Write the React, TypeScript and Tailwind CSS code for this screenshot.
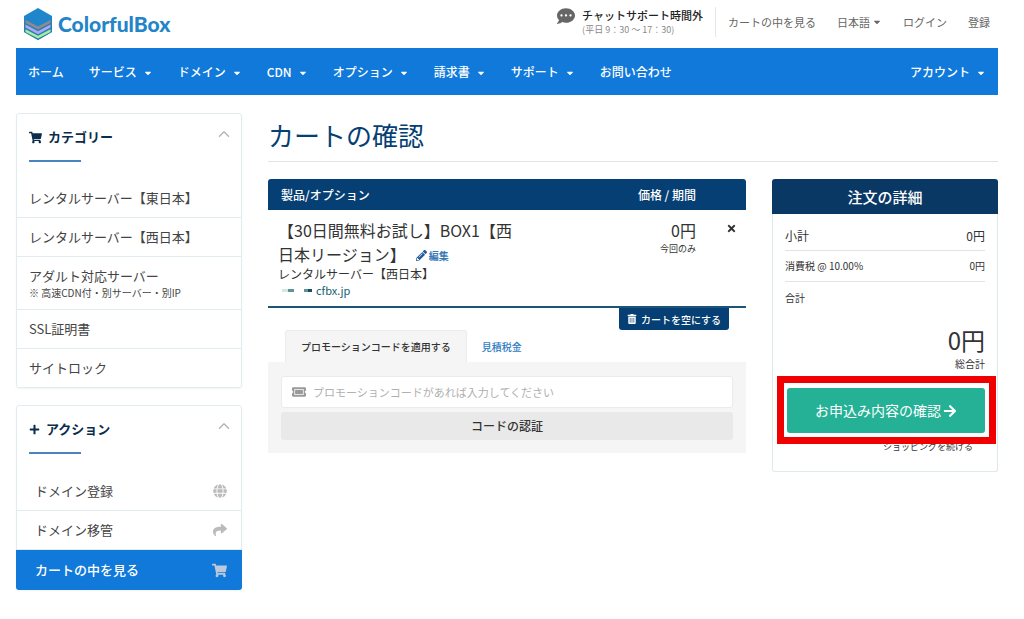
import type { ReactNode } from "react";
import {
  FaArrowRight,
  FaCaretDown,
  FaCommentDots,
  FaGlobe,
  FaPencilAlt,
  FaPlus,
  FaShare,
  FaShoppingCart,
  FaTicketAlt,
  FaTimes,
  FaTrashAlt,
} from "react-icons/fa";
import { ChevronUp } from "lucide-react";

const navItems = [
  { label: "ホーム", menu: false },
  { label: "サービス", menu: true },
  { label: "ドメイン", menu: true },
  { label: "CDN", menu: true },
  { label: "オプション", menu: true },
  { label: "請求書", menu: true },
  { label: "サポート", menu: true },
  { label: "お問い合わせ", menu: false },
];

const categories = [
  { label: "レンタルサーバー【東日本】" },
  { label: "レンタルサーバー【西日本】" },
  { label: "アダルト対応サーバー", note: "※ 高速CDN付・別サーバー・別IP" },
  { label: "SSL証明書" },
  { label: "サイトロック" },
];

function Logo() {
  return (
    <a href="#" className="flex items-center gap-1.5" aria-label="ColorfulBox">
      <svg viewBox="0 0 28 32" className="h-8 w-7">
        <path d="M14 0 28 8v16l-14 8L0 24V8z" fill="#1f86cc" />
        <path d="M0 12v12l14 8 14-8V12l-14 7.500z" fill="#2b7fae" />
        <path d="M1.500 15v-2.900L14 18.600l12.500-6.500V15L14 21.600z" fill="#8f8a90" />
        <path d="M1.500 19.600v-3L14 23.200l12.500-6.600v3L14 26.200z" fill="#aaa8f8" />
        <path d="M1.500 24v-2.800L14 27.800l12.500-6.600V24L14 30.600z" fill="#a8ee9c" />
      </svg>
      <span className="font-[family-name:Lato,sans-serif] text-[21px] leading-8 font-black text-[#2385c8]">
        ColorfulBox
      </span>
    </a>
  );
}

function NavLink({ label, menu }: { label: string; menu: boolean }) {
  return (
    <a href="#" className="flex items-center gap-1.5">
      {label}
      {menu && <FaCaretDown className="mt-0.5 size-2.5" />}
    </a>
  );
}

function SideCard({ icon, title, children }: { icon: ReactNode; title: string; children: ReactNode }) {
  return (
    <section className="rounded-[3px] border border-[#e2ecf0] shadow-xs">
      <div className="px-3 pt-[13px]">
        <div className="flex h-5 items-center justify-between">
          <h2 className="flex items-center gap-1.5 text-[13px] font-bold text-[#0c2c4c]">
            {icon}
            {title}
          </h2>
          <button type="button" className="-mr-1 pb-1.5" aria-label={title + "を閉じる"}>
            <ChevronUp className="size-[18px] text-[#b5b5b5]" strokeWidth={2} />
          </button>
        </div>
        <div className="mt-[13px] mb-[17px] h-0.5 w-[52px] bg-[#4a84c0]" />
      </div>
      {children}
    </section>
  );
}

export default function App() {
  return (
    <div
      lang="ja"
      className="min-h-screen bg-white pr-[26px] pb-7 pl-4 font-['Noto_Sans_CJK_JP',sans-serif] text-[#333]"
    >
      <header className="flex h-12 items-center justify-between pl-2">
        <Logo />
        <div className="flex items-center pb-1 text-[11px] text-[#666]">
          <div className="flex gap-[7px] border-r border-[#e6e6e6] pr-3">
            <FaCommentDots className="size-[18px] text-[#666]" />
            <div>
              <p className="text-[11px] leading-4 font-medium text-[#222]">チャットサポート時間外</p>
              <p className="text-[9px] leading-3.5 text-[#8a8a8a]">(平日 9：30 〜 17：30)</p>
            </div>
          </div>
          <nav className="flex items-center gap-[21px] pr-2 pl-3" aria-label="ユーザーメニュー">
            <a href="#">カートの中を見る</a>
            <a href="#" className="flex items-center gap-0.5">
              日本語
              <FaCaretDown className="size-2.5" />
            </a>
            <a href="#">ログイン</a>
            <a href="#">登録</a>
          </nav>
        </div>
      </header>

      <nav
        className="flex h-[47px] items-center justify-between bg-[#1079da] px-3 text-[12px] font-medium text-white"
        aria-label="メインメニュー"
      >
        <div className="flex items-center gap-[25px]">
          {navItems.map((item) => (
            <NavLink key={item.label} label={item.label} menu={item.menu} />
          ))}
        </div>
        <NavLink label="アカウント" menu />
      </nav>

      <div className="mt-[18px] flex items-start gap-[26px]">
        <aside className="flex w-[226px] shrink-0 flex-col gap-[17px]">
          <SideCard icon={<FaShoppingCart className="size-[13px]" />} title="カテゴリー">
            <ul className="divide-y divide-[#e2ecf0] text-[13px] text-[#444]">
              {categories.map((item) => (
                <li key={item.label}>
                  <a href="#" className="block px-3 py-[9px] leading-5">
                    {item.label}
                    {item.note && (
                      <span className="block text-[10px] leading-3.5">{item.note}</span>
                    )}
                  </a>
                </li>
              ))}
            </ul>
          </SideCard>

          <SideCard icon={<FaPlus className="size-[11px]" />} title="アクション">
            <ul className="divide-y divide-[#e2ecf0] pt-px text-[13px] text-[#444]">
              <li>
                <a href="#" className="flex items-center justify-between py-[9px] pr-3.5 pl-[18px] leading-5">
                  ドメイン登録
                  <FaGlobe className="size-3.5 text-[#bbb]" />
                </a>
              </li>
              <li>
                <a href="#" className="flex items-center justify-between py-[9px] pr-3.5 pl-[18px] leading-5">
                  ドメイン移管
                  <FaShare className="size-3.5 text-[#bbb]" />
                </a>
              </li>
              <li className="-mx-px -mb-px rounded-b-[3px] bg-[#1079da] font-medium text-white">
                <a href="#" className="flex items-center justify-between py-2.5 pr-[15px] pl-[19px] leading-5">
                  カートの中を見る
                  <FaShoppingCart className="size-[15px] text-[#bcc9d8]" />
                </a>
              </li>
            </ul>
          </SideCard>
        </aside>

        <main className="min-w-0 flex-1">
          <h1 className="border-b border-[#e3e3e3] pt-1 pb-2 text-[26px] leading-9 text-[#063f73]">
            カートの確認
          </h1>

          <div className="mt-[17px] flex items-start gap-[26px]">
            <div className="min-w-0 flex-1">
              <table className="w-full border-separate border-spacing-0 text-left">
                <thead className="text-[12px] text-white">
                  <tr className="h-[31px]">
                    <th className="rounded-tl-[3px] bg-[#063f73] pl-[13px] font-medium">製品/オプション</th>
                    <th className="w-40 bg-[#063f73] text-right font-medium">価格 / 期間</th>
                    <th className="w-[50px] rounded-tr-[3px] bg-[#063f73]" aria-label="削除" />
                  </tr>
                </thead>
                <tbody>
                  <tr className="align-top">
                    <td className="border-b-2 border-[#1d5478] pt-2 pb-[7px] pl-2.5">
                      <p className="pr-3 text-[16px] leading-6">
                        【30日間無料お試し】BOX1【西日本リージョン】
                        <a
                          href="#"
                          className="ml-2.5 inline-flex items-center gap-0.5 text-[10px] leading-3.5 font-bold text-[#3a78b5]"
                        >
                          <FaPencilAlt className="size-[11px] text-[#1f5c99]" />
                          編集
                        </a>
                      </p>
                      <p className="text-[12px] leading-4">レンタルサーバー【西日本】</p>
                      <p className="flex items-center pl-1 text-[11px] leading-[17px] text-[#14606e]">
                        <span className="h-[3px] w-1.5 bg-[#d5e6e8]" />
                        <span className="h-[3px] w-1.5 bg-[#5f9299]" />
                        <span className="ml-2.5 h-[3px] w-1 bg-[#5f9299]" />
                        <span className="mr-1 h-[3px] w-1 bg-[#14505c]" />
                        cfbx.jp
                      </p>
                    </td>
                    <td className="border-b-2 border-[#1d5478] pt-2 text-right">
                      <p className="text-[16px] leading-6">0円</p>
                      <p className="text-[9px] leading-3.5">今回のみ</p>
                    </td>
                    <td className="border-b-2 border-[#1d5478] pt-3 pr-2">
                      <button type="button" aria-label="削除" className="ml-auto block p-px">
                        <FaTimes className="size-[11px]" />
                      </button>
                    </td>
                  </tr>
                </tbody>
              </table>

              <div className="flex justify-end pr-[17px]">
                <button
                  type="button"
                  className="flex h-[22px] items-center gap-1 rounded-b-[3px] bg-[#063f73] px-2 text-[10px] font-medium text-white"
                >
                  <FaTrashAlt className="size-2.5" />
                  カートを空にする
                </button>
              </div>

              <div className="flex pl-[17px] text-[10px] font-medium" role="tablist">
                <button
                  type="button"
                  role="tab"
                  aria-selected="true"
                  className="h-8 rounded-t-[3px] border border-b-0 border-[#ececec] bg-[#f5f5f5] px-[15px] text-[#333]"
                >
                  プロモーションコードを適用する
                </button>
                <button type="button" role="tab" aria-selected="false" className="h-8 px-[15px] text-[#2f7cbf]">
                  見積税金
                </button>
              </div>

              <form className="bg-[#f5f5f5] px-[13px] pt-3.5 pb-[13px]">
                <label className="flex h-8 items-center gap-[7px] rounded-[3px] border border-[#e6edf0] bg-white px-2.5">
                  <FaTicketAlt className="size-3.5 shrink-0 text-[#999]" aria-hidden="true" />
                  <input
                    type="text"
                    aria-label="プロモーションコード"
                    placeholder="プロモーションコードがあれば入力してください"
                    className="min-w-0 flex-1 text-[11px] outline-none placeholder:text-[#b0b0b0]"
                  />
                </label>
                <button
                  type="button"
                  className="mt-1 h-7 w-full rounded-[3px] bg-[#e9e9e9] text-[12px] font-medium text-[#333]"
                >
                  コードの認証
                </button>
              </form>
            </div>

            <section className="w-[226px] shrink-0 rounded-[3px] border border-t-0 border-[#dfe9ec]">
              <h2 className="-mx-px rounded-t-[3px] bg-[#0a3865] text-center text-[15px] leading-[35px] font-medium text-white">
                注文の詳細
              </h2>
              <dl className="px-3 pt-3">
                <div className="flex items-center justify-between border-b border-[#e3e3e3] pb-1 text-[12px] leading-5">
                  <dt>小計</dt>
                  <dd>0円</dd>
                </div>
                <div className="flex items-center justify-between border-b border-[#e3e3e3] py-[7px] text-[10px] leading-4">
                  <dt>消費税 @ 10.00%</dt>
                  <dd>0円</dd>
                </div>
                <div className="pt-2 text-[10px] leading-4">
                  <dt>合計</dt>
                  <dd className="mt-[18px] text-right">
                    <span className="block text-[24px] leading-8">0円</span>
                    <span className="block leading-4">総合計</span>
                  </dd>
                </div>
              </dl>
              <div className="relative mt-4 pr-3 pl-3.5">
                <button
                  type="button"
                  className="flex h-[45px] w-full items-center justify-center gap-0.5 rounded-[3px] bg-[#25b196] text-[14px] text-white"
                >
                  お申込み内容の確認
                  <FaArrowRight className="size-3.5" />
                </button>
                <div className="pointer-events-none absolute -top-3 right-px -bottom-[11px] left-1 border-[7px] border-[#f00000]" />
              </div>
              <div className="px-6 pt-1.5 pb-4 text-right text-[9px] leading-4">
                <a href="#">ショッピングを続ける</a>
              </div>
            </section>
          </div>
        </main>
      </div>
    </div>
  );
}
